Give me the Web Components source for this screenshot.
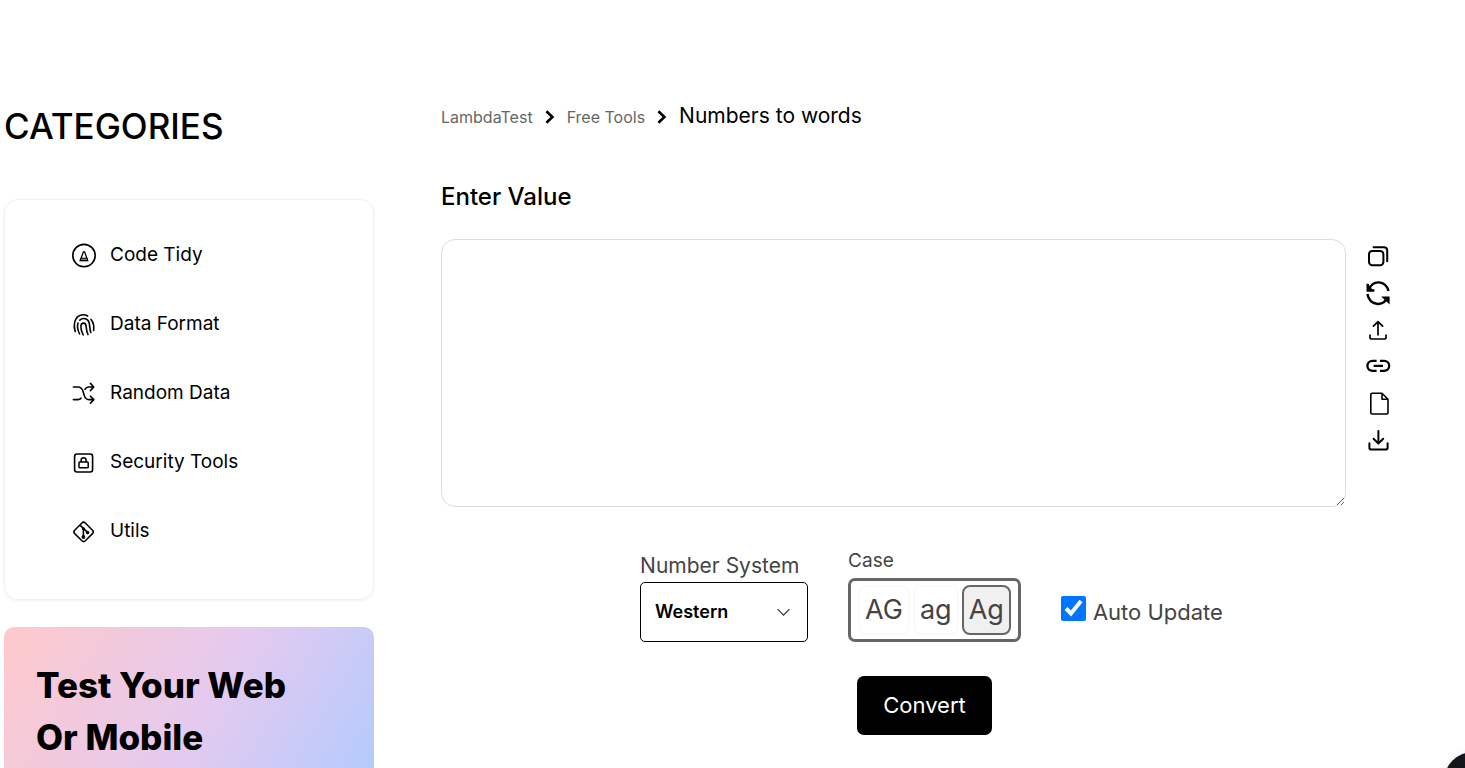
<!DOCTYPE html>
<html lang="en">
<head>
<meta charset="utf-8">
<meta name="viewport" content="width=device-width, initial-scale=1">
<title>Numbers to words</title>
<style>
html { scrollbar-width: none; }
body { margin: 0; background: #fff; color: #000; font-family: Inter, "Liberation Sans", sans-serif; }
</style>
</head>
<body>
<tools-page>
  <category-panel slot="side">
    <category-item icon="tidy">Code Tidy</category-item>
    <category-item icon="finger">Data Format</category-item>
    <category-item icon="shuffle">Random Data</category-item>
    <category-item icon="lock">Security Tools</category-item>
    <category-item icon="git">Utils</category-item>
  </category-panel>
  <promo-card slot="side">Test Your Web<br>Or Mobile</promo-card>
  <bread-crumbs></bread-crumbs>
  <value-editor></value-editor>
  <convert-options></convert-options>
</tools-page>
<chat-bubble></chat-bubble>
<script>
const icons = {
  tidy: '<circle cx="12" cy="12.6" r="11.2" stroke-width="1.6"/><path d="M11.4 8.8h1.2L15.6 17.6H8.2z" stroke-width="1.3"/><path d="M8.8 15.2h6.4l.6 2.4H8.2z" fill="#777" stroke-width="1"/>',
  finger: '<path d="M3.2 19.4C1.2 13.6 2.2 5.2 8.6 3.2c2.6-.8 5-.4 7 .8M19 7.4c2.8 3.4 3.2 7.4 2.6 11M7.6 22C5.2 17.4 5.2 13.8 6 11M7.8 8.2c3.4-3.2 8.4-1.4 9.4 2.8.8 3.2.4 6.4 1.6 9.4M11.2 22.8c-1.8-3.6-2.6-7-2.2-9.4.6-3.2 4.4-3 5 .2.6 3.4.4 6.2 2 9" stroke-width="1.6" stroke-linecap="round"/>',
  shuffle: '<path d="M1.4 6h4.8c2.8 0 3.8 1.4 4.8 4.2l1.2 4.2c.8 2.6 2 4.2 4.6 4.2h5M1.4 18.6h4.4c1.6 0 2.6-.6 3.2-1.4M13 8.4c.8-1.6 1.8-2.4 3.6-2.4h5.2M18.4 2.4L21.8 6l-3.4 3.6M18.4 15.2l3.4 3.4-3.4 3.6" stroke-width="1.6" stroke-linecap="round" stroke-linejoin="round"/>',
  lock: '<rect x="2.6" y="4" width="18" height="18" rx="2.4" stroke-width="1.6"/><rect x="7" y="12" width="9.2" height="5.8" rx=".8" stroke-width="1.5"/><path d="M9.1 12v-1.8a2.5 2.5 0 0 1 5 0V12" stroke-width="1.5"/>',
  git: '<rect x="4.1" y="5.4" width="15" height="15" rx="2.4" transform="rotate(45 11.6 12.9)" stroke-width="1.5"/><path d="M8.2 6.4l3.2 3v8.4M11.4 9.4l4.2 4" stroke-width="1.6"/><g fill="currentColor" stroke="none"><circle cx="11.4" cy="9.8" r="1.5"/><circle cx="11.4" cy="18" r="1.9"/><circle cx="15.6" cy="13.6" r="1.8"/></g>',
  copy: '<rect x="3" y="7" width="14.4" height="14.2" rx="3.2" stroke-width="2"/><path d="M7.6 3.2h10.2c2.2 0 3.4 1.2 3.4 3.4v10.6" stroke-width="2" stroke-linecap="round"/>',
  refresh: '<path d="M3 8.4C7-1.6 19.4-.8 22.6 10M1.4 13c2.2 11.4 15.6 13.4 20 3.6" stroke-width="2.4"/><path d="M1.8 3v6.4h6.6" stroke-width="2.4"/><path d="M.8 2l7.4 8.4H.8zM15.2 15.4h8.4v8z" fill="currentColor" stroke="none"/>',
  upload: '<path d="M12 16.8V3.6M7.4 8.2L12 3.6l4.6 4.6M4 17v2.2c0 1 .8 1.8 1.8 1.8h12.4c1 0 1.8-.8 1.8-1.8V17" stroke-width="1.7" stroke-linecap="round" stroke-linejoin="round"/>',
  link: '<path d="M10.6 5.8H6.4a5 5 0 0 0 0 10h4.2M14 5.8h4.2a5 5 0 0 1 0 10H14M7.6 10.8H17" stroke-width="2.3"/>',
  file: '<path d="M6 1.2h10l6 6v13.6c0 .8-.4 1.2-1.2 1.2H6c-.8 0-1.2-.4-1.2-1.2V2.4c0-.8.4-1.2 1.2-1.2zM16 1.4v5.8h5.8" stroke-width="1.6" stroke-linejoin="round"/>',
  download: '<path d="M12.4 2v12.4M7.6 9.8l4.8 4.8 4.8-4.8M3.4 14.2v4.6c0 1 .8 1.8 1.8 1.8h14.6c1 0 1.8-.8 1.8-1.8v-4.6" stroke-width="2" stroke-linecap="round" stroke-linejoin="round"/>'
};
const svg = name => `<svg width="24" height="24" viewBox="0 0 24 24" fill="none" stroke="currentColor" aria-hidden="true">${icons[name]}</svg>`;

function define(name, render) {
  customElements.define(name, class extends HTMLElement {
    constructor() {
      super();
      this.attachShadow({ mode: 'open' }).innerHTML = '<style>*{box-sizing:border-box}svg{display:block;overflow:visible}</style>' + render(this);
    }
  });
}

define('tools-page', () => `
<style>
:host { display: grid; grid-template-columns: 370px minmax(0, 1fr); column-gap: 67px; padding: 100px 75px 0 4px; }
aside, main { display: flex; flex-direction: column; }
aside { gap: 27px; }
</style>
<aside><slot name="side"></slot></aside>
<main><slot></slot></main>`);

define('category-panel', () => `
<style>
:host { display: block; }
h2 { margin: 0 0 47px; font-size: 35px; line-height: 52px; font-weight: 500; }
nav { padding: 20px 0 34px 67px; border: 1px solid #f1f1f1; border-radius: 14px; box-shadow: 0 1px 3px rgba(0,0,0,.06); }
</style>
<h2>CATEGORIES</h2>
<nav aria-label="Categories"><slot></slot></nav>`);

define('category-item', el => `
<style>
:host { display: block; }
a { display: flex; align-items: center; gap: 14px; height: 69px; color: #000; font-size: 19px; line-height: 28px; text-decoration: none; }
</style>
<a href="#">${svg(el.getAttribute('icon'))}<slot></slot></a>`);

define('promo-card', () => `
<style>
:host { display: block; }
section { min-height: 244px; padding: 32px; border-radius: 10px; background: linear-gradient(121deg, #ffc9cb, #e3caf0 50%, #abcbff 95%); }
h3 { margin: 0; font-size: 35px; line-height: 52px; font-weight: 800; }
</style>
<section><h3><slot></slot></h3></section>`);

define('bread-crumbs', () => `
<style>
:host { display: block; }
nav { display: flex; align-items: baseline; gap: 12px; line-height: 32px; }
a { color: #666; font-size: 16px; text-decoration: none; }
span { font-size: 21px; }
</style>
<nav aria-label="Breadcrumb"><a href="#">LambdaTest</a>
<svg width="10" height="14" viewBox="0 0 10 14" fill="none" stroke="#000" stroke-width="2.6"><path d="M1.4 2.2L7.4 8l-6 5.8"/></svg>
<a href="#">Free Tools</a>
<svg width="10" height="14" viewBox="0 0 10 14" fill="none" stroke="#000" stroke-width="2.6"><path d="M1.4 2.2L7.4 8l-6 5.8"/></svg>
<span aria-current="page">Numbers to words</span></nav>`);

define('value-editor', () => `
<style>
:host { display: block; margin-top: 48px; }
label { display: block; margin-bottom: 26px; font-size: 24px; line-height: 32px; font-weight: 500; }
.row { display: flex; gap: 20px; }
textarea { flex: 1; min-width: 0; height: 268px; padding: 16px; border: 1px solid #ddd; border-radius: 14px; outline: 0; resize: vertical; font: 20px/28px Inter, sans-serif; }
.tools { display: flex; flex-direction: column; gap: 13px; padding-top: 5px; }
button { padding: 0; border: 0; background: none; color: #000; }
</style>
<label for="value">Enter Value</label>
<div class="row"><textarea id="value"></textarea>
<div class="tools">${['copy', 'refresh', 'upload', 'link', 'file', 'download'].map(n => `<button type="button" aria-label="${n}">${svg(n)}</button>`).join('')}</div></div>`);

define('convert-options', () => `
<style>
:host { display: block; margin-top: 40px; color: #444; font-size: 22px; line-height: 28px; }
.options { display: flex; justify-content: center; align-items: flex-end; gap: 40px; padding-left: 32px; }
.field { display: flex; flex-direction: column; }
.field label { font-size: 21px; }
.select { display: grid; align-items: center; width: 168px; margin-top: 2px; }
.select > * { grid-area: 1 / 1; }
.select svg { justify-self: end; margin-right: 18px; pointer-events: none; }
select { width: 100%; height: 60px; padding: 0 14px; border: 1px solid #000; border-radius: 5px; appearance: none; background: #fff; color: #000; font: 600 18px/28px Inter, sans-serif; }
.case span { margin-bottom: 3px; font-size: 19px; }
.choices { display: flex; gap: 3px; padding: 4px 7px; border: 3px solid #666; border-radius: 7px; }
.choices button { height: 50px; padding: 0 5px; border: 2px solid #fafafa; border-radius: 8px; background: #fff; color: #444; font: 27px/36px Inter, sans-serif; }
.choices button[aria-pressed="true"] { border-color: #666; background: #f0f0f0; }
.auto { display: flex; align-items: center; gap: 7px; height: 60px; }
.auto input { width: 25px; height: 25px; margin: 0 0 8px; accent-color: #0075ff; }
.actions { display: flex; justify-content: center; margin-top: 34px; padding: 0 0 33px 18px; }
.submit { padding: 15px 26px; border: 0; border-radius: 7px; background: #000; color: #fff; font: 22px/29px Inter, sans-serif; }
</style>
<div class="options">
  <div class="field"><label for="system">Number System</label>
    <div class="select"><select id="system"><option>Western</option><option>Indian</option></select>
    <svg width="13" height="8" viewBox="0 0 13 8" fill="none" stroke="#333" stroke-width="1.2"><path d="M.6 1.2l5.9 6 5.9-6"/></svg></div>
  </div>
  <div class="field case"><span id="case">Case</span>
    <div class="choices" role="group" aria-labelledby="case"><button type="button">AG</button><button type="button">ag</button><button type="button" aria-pressed="true">Ag</button></div>
  </div>
  <div class="auto"><input id="auto" type="checkbox" checked><label for="auto">Auto Update</label></div>
</div>
<div class="actions"><button class="submit" type="button">Convert</button></div>`);

define('chat-bubble', () => `
<style>
:host { position: fixed; right: -37px; bottom: -42px; }
button { display: block; width: 58px; height: 58px; border: 0; border-radius: 50%; background: #15161b; box-shadow: 0 1px 6px rgba(0,0,0,.15); }
</style>
<button type="button" aria-label="Open chat"></button>`);
</script>
</body>
</html>
